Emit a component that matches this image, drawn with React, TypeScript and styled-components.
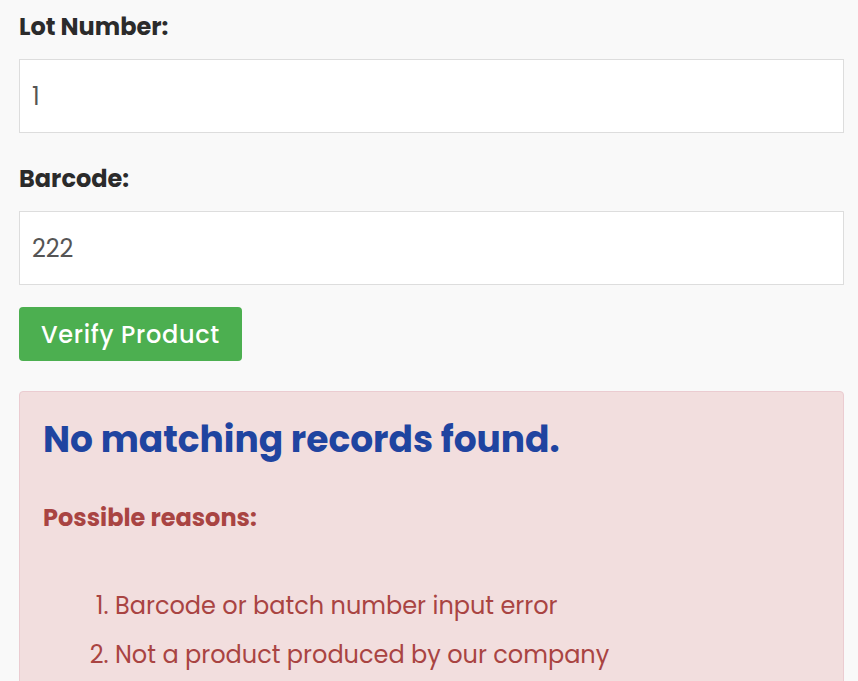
import styled, { createGlobalStyle } from "styled-components";

const GlobalStyle = createGlobalStyle`
  body {
    margin: 0;
    background: #f9f9f9;
    font-family: Poppins, "Open Sans", "Noto Sans", sans-serif;
    color: #333;
  }
`;

const Page = styled.div`
  padding: 8px 14px 0 19px;
`;

const Field = styled.div`
  display: flex;
  flex-direction: column;
`;

const Label = styled.label`
  font-size: 24px;
  font-weight: 700;
  line-height: 38px;
  color: #2b2b2b;
  margin-bottom: 13px;
`;

const Input = styled.input`
  box-sizing: border-box;
  height: 74px;
  width: 100%;
  padding: 0 12px;
  border: 1px solid #ddd;
  background: #fff;
  font-family: inherit;
  font-size: 24px;
  color: #555;
  outline: none;
  margin-bottom: 27px;
`;

const Button = styled.button`
  align-self: flex-start;
  height: 54px;
  padding: 0 22px;
  border: none;
  border-radius: 4px;
  background: #4caf50;
  color: #fff;
  font-family: inherit;
  font-size: 24px;
  letter-spacing: 0.7px;
  font-weight: 500;
  margin-top: -5px;
`;

const Alert = styled.div`
  box-sizing: border-box;
  margin-top: 30px;
  padding: 24px 23px 30px;
  background: #f2dede;
  border: 1px solid #ebccd1;
  border-radius: 4px;
  color: #a94442;
`;

const Heading = styled.h2`
  margin: 0;
  font-size: 36px;
  font-weight: 700;
  line-height: 48px;
  color: #1f44a0;
`;

const Reasons = styled.p`
  margin: 36px 0 0;
  font-size: 24px;
  font-weight: 700;
  line-height: 36px;
`;

const List = styled.ol`
  margin: 45px 0 0;
  padding-left: 72px;
  font-size: 24px;
  line-height: 49px;
`;

export default function App() {
  return (
    <>
      <GlobalStyle />
      <Page>
        <Field>
          <Label>Lot Number:</Label>
          <Input defaultValue="1" />
          <Label>Barcode:</Label>
          <Input defaultValue="222" />
          <Button>Verify Product</Button>
        </Field>
        <Alert>
          <Heading>No matching records found.</Heading>
          <Reasons>Possible reasons:</Reasons>
          <List>
            <li>Barcode or batch number input error</li>
            <li>Not a product produced by our company</li>
          </List>
        </Alert>
      </Page>
    </>
  );
}
